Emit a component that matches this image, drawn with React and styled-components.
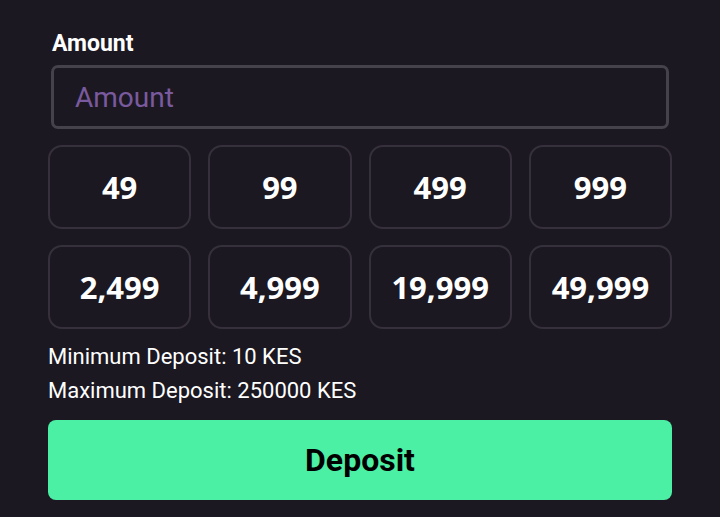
import React from 'react';
import styled, { createGlobalStyle } from 'styled-components';

const bg = '#1c1821';
const green = '#4bf0a5';

const amounts = ['49', '99', '499', '999', '2,499', '4,999', '19,999', '49,999'];

const GlobalStyle = createGlobalStyle`
  html, body {
    margin: 0;
    padding: 0;
    background: ${bg};
  }
  body {
    font-family: Roboto, "Liberation Sans", sans-serif;
    color: #fff;
  }
`;

const App = () => {
  return (
    <>
      <GlobalStyle />
      <Form>
        <Label htmlFor="amount">Amount</Label>
        <Input id="amount" placeholder="Amount" />
        <Grid>
          {amounts.map(a => (
            <Preset key={a}>{a}</Preset>
          ))}
        </Grid>
        <Limits>
          <div>Minimum Deposit: 10 KES</div>
          <div>Maximum Deposit: 250000 KES</div>
        </Limits>
        <DepositButton>Deposit</DepositButton>
      </Form>
    </>
  );
};

const Form = styled.div`
  width: 624px;
  padding: 30px 0 0 48px;
  display: flex;
  flex-direction: column;
`;

const Label = styled.label`
  font-size: 23px;
  font-weight: 700;
  line-height: 28px;
  padding-left: 4px;
  margin-bottom: 7px;
`;

const Input = styled.input`
  box-sizing: border-box;
  margin: 0 3px;
  height: 64px;
  border: 3px solid #46424c;
  border-radius: 7px;
  background: ${bg};
  padding: 0 21px;
  font-family: Roboto, "Liberation Sans", sans-serif;
  font-size: 28px;
  color: #fff;
  outline: none;

  &::placeholder {
    color: #7a5a9e;
  }
`;

const Grid = styled.div`
  display: grid;
  grid-template-columns: repeat(4, 1fr);
  column-gap: 17px;
  row-gap: 16px;
  margin-top: 16px;
`;

const Preset = styled.button`
  height: 84px;
  box-sizing: border-box;
  border: 2px solid #35303b;
  border-radius: 14px;
  background: ${bg};
  color: #fff;
  font-family: "Open Sans", "Noto Sans", sans-serif;
  font-weight: 700;
  font-size: 31px;
  cursor: pointer;
`;

const Limits = styled.div`
  margin-top: 11px;
  font-size: 22px;
  line-height: 34px;
`;

const DepositButton = styled.button`
  margin-top: 12px;
  height: 80px;
  border: none;
  border-radius: 8px;
  background: ${green};
  color: #000;
  font-family: Roboto, "Liberation Sans", sans-serif;
  font-weight: 700;
  font-size: 32px;
  cursor: pointer;
`;

export default App;
